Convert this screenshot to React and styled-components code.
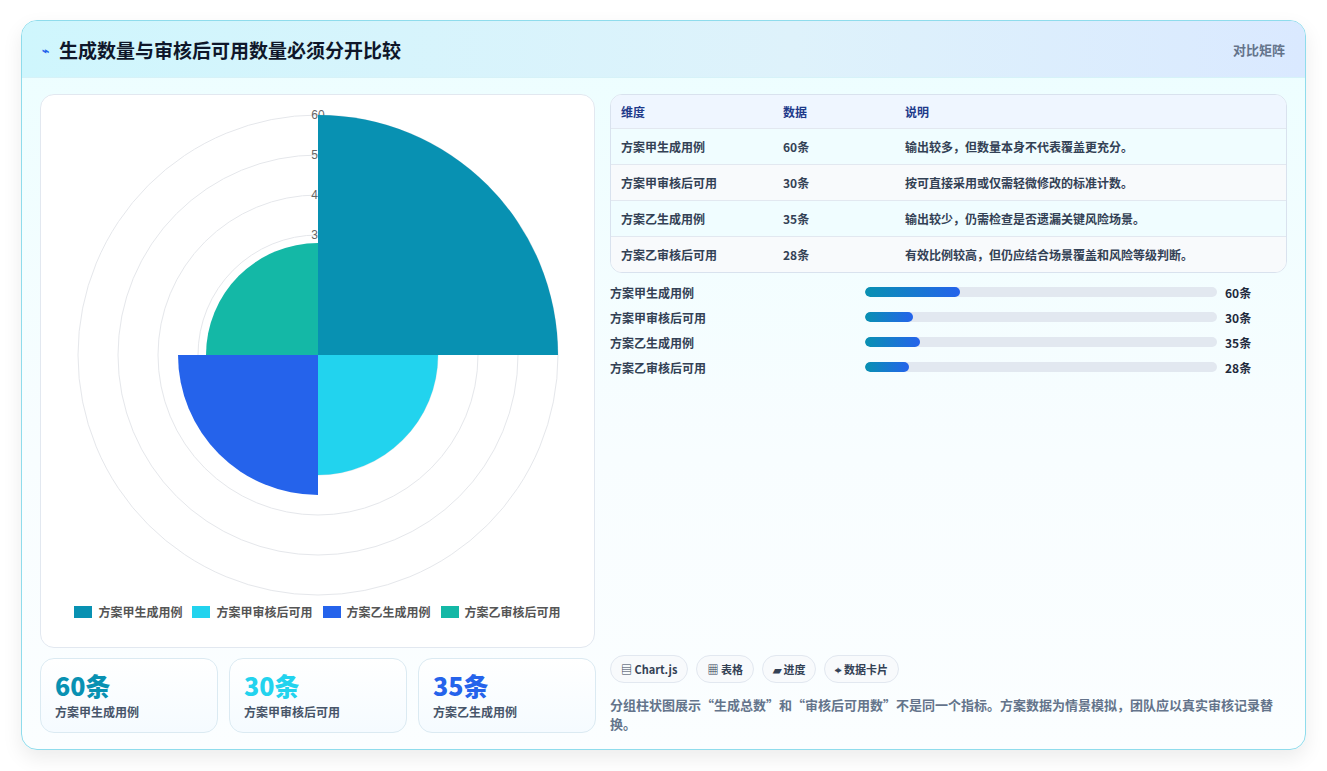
import React from "react";
import styled, { createGlobalStyle } from "styled-components";

const G = createGlobalStyle`
  body{margin:0;background:#fff;font-family:"Noto Sans CJK SC","Noto Sans",sans-serif;}
`;
const Page = styled.div`padding:20px 21px 21px 21px;`;
const Card = styled.div`
  width:1285px;height:730px;box-sizing:border-box;border:1px solid #8fdcec;border-radius:16px;overflow:hidden;
  background:linear-gradient(180deg,#ecfeff 0%,#f8fdff 60%,#fbfeff 100%);
  box-shadow:0 8px 20px rgba(0,0,0,0.08);display:flex;flex-direction:column;`;
const Header = styled.div`
  height:56px;flex:none;display:flex;align-items:center;justify-content:space-between;padding:0 20px;
  background:linear-gradient(90deg,#cff6fd 0%,#def2fb 60%,#dae9ff 100%);border-bottom:1px solid #d6f2f8;`;
const Title = styled.h1`margin:0;font-size:19px;font-weight:700;color:#0f172a;display:flex;align-items:center;gap:10px;`;
const Icon = styled.span`color:#2563eb;font-size:12px;`;
const Tag = styled.span`font-size:13px;color:#64748b;font-weight:600;`;
const Body = styled.div`flex:1;display:grid;grid-template-columns:555px 1fr;gap:15px;padding:16px 18px 18px 18px;`;
const Left = styled.div`display:flex;flex-direction:column;gap:10px;`;
const ChartBox = styled.div`height:554px;box-sizing:border-box;background:#fff;border:1px solid #e2e8f0;border-radius:14px;display:flex;flex-direction:column;align-items:center;`;
const Legend = styled.div`display:flex;gap:10px;margin-top:-2px;`;
const LItem = styled.span`display:flex;align-items:center;gap:6px;font-size:12px;color:#555;font-weight:600;`;
const Sw = styled.i`width:18px;height:12px;background:${p=>p.c};display:inline-block;`;
const Stats = styled.div`display:grid;grid-template-columns:178px 178px 178px;gap:11px;`;
const Stat = styled.div`height:75px;box-sizing:border-box;border:1px solid #dbeaf2;border-radius:14px;background:linear-gradient(180deg,#fff,#f5fbff);padding:10px 14px;`;
const Big = styled.div`font-size:25px;font-weight:800;color:${p=>p.c};line-height:32px;`;
const Small = styled.div`font-size:12px;color:#475569;font-weight:600;margin-top:2px;`;
const Right = styled.div`display:flex;flex-direction:column;`;
const Table = styled.div`border:1px solid #d9e2ee;border-radius:12px;overflow:hidden;background:#fff;`;
const Row = styled.div`display:grid;grid-template-columns:162px 122px 1fr;height:${p=>p.h||35}px;align-items:center;padding:0 10px;
  font-size:12px;font-weight:600;color:${p=>p.head?"#1e3a8a":"#334155"};
  background:${p=>p.head?"#eff6ff":p.alt?"#f8fafc":"#f0fdff"};border-top:${p=>p.head?"none":"1px solid #e2e8f0"};`;
const Bars = styled.div`display:flex;flex-direction:column;gap:7px;margin-top:10px;`;
const BarRow = styled.div`display:grid;grid-template-columns:255px 352px 1fr;align-items:center;height:18px;font-size:12px;font-weight:600;color:#334155;`;
const Track = styled.div`height:10px;border-radius:5px;background:#e2e8f0;overflow:hidden;`;
const Fill = styled.div`height:100%;border-radius:5px;background:linear-gradient(90deg,#0891b2,#2563eb);`;
const Val = styled.span`margin-left:8px;font-weight:700;color:#1e293b;`;
const Foot = styled.div`margin-top:auto;display:flex;flex-direction:column;gap:12px;`;
const Chips = styled.div`display:flex;gap:8px;`;
const Chip = styled.span`height:28px;box-sizing:border-box;padding:0 10px;border:1px solid #e2e8f0;border-radius:14px;background:#f8fafc;font-size:11px;font-weight:600;color:#334155;display:flex;align-items:center;`;
const Note = styled.p`margin:0;font-size:13px;color:#64748b;font-weight:600;`;

const C=["#0891b2","#22d3ee","#2563eb","#14b8a6"];
const data=[["方案甲生成用例",60,"输出较多，但数量本身不代表覆盖更充分。"],["方案甲审核后可用",30,"按可直接采用或仅需轻微修改的标准计数。"],["方案乙生成用例",35,"输出较少，仍需检查是否遗漏关键风险场景。"],["方案乙审核后可用",28,"有效比例较高，但仍应结合场景覆盖和风险等级判断。"]];

function sector(r,a0,a1){const cx=277,cy=260;const p=a=>[cx+r*Math.cos(a),cy+r*Math.sin(a)];const [x0,y0]=p(a0),[x1,y1]=p(a1);return `M${cx},${cy}L${x0},${y0}A${r},${r} 0 0 1 ${x1},${y1}Z`;}
function Polar(){const r=[240,200,160,120,80,40];return(
<svg width="554" height="510" viewBox="0 0 554 510">
 {r.map(v=><circle key={v} cx="277" cy="260" r={v} fill="none" stroke="#e5e7eb"/>)}
 {[60,50,40,30,20,10].map((t,i)=><text key={t} x="277" y={260-r[i]+4} textAnchor="middle" fontSize="12" fill="#666" fontFamily="Liberation Sans">{t}</text>)}
 {data.map((d,i)=><path key={i} d={sector(d[1]*4,-Math.PI/2+i*Math.PI/2,i*Math.PI/2)} fill={C[i]}/>)}
</svg>);}

export default function App(){return(<><G/><Page><Card>
<Header><Title><Icon>⌁</Icon>生成数量与审核后可用数量必须分开比较</Title><Tag>对比矩阵</Tag></Header>
<Body>
<Left>
 <ChartBox><Polar/><Legend>{data.map((d,i)=><LItem key={i}><Sw c={C[i]}/>{d[0]}</LItem>)}</Legend></ChartBox>
 <Stats>{data.slice(0,3).map((d,i)=><Stat key={i}><Big c={C[i]}>{d[1]}条</Big><Small>{d[0]}</Small></Stat>)}</Stats>
</Left>
<Right>
 <Table><Row head h={33}><span>维度</span><span>数据</span><span>说明</span></Row>
 {data.map((d,i)=><Row key={i} alt={i%2}><span>{d[0]}</span><span>{d[1]}条</span><span>{d[2]}</span></Row>)}</Table>
 <Bars>{data.map((d,i)=><BarRow key={i}><span>{d[0]}</span><Track><Fill style={{width:`${d[1]*0.45}%`}}/></Track><Val>{d[1]}条</Val></BarRow>)}</Bars>
 <Foot><Chips><Chip>▤ Chart.js</Chip><Chip>▦ 表格</Chip><Chip>▰ 进度</Chip><Chip>⌖ 数据卡片</Chip></Chips>
 <Note>分组柱状图展示“生成总数”和“审核后可用数”不是同一个指标。方案数据为情景模拟，团队应以真实审核记录替换。</Note></Foot>
</Right>
</Body></Card></Page></>);}
